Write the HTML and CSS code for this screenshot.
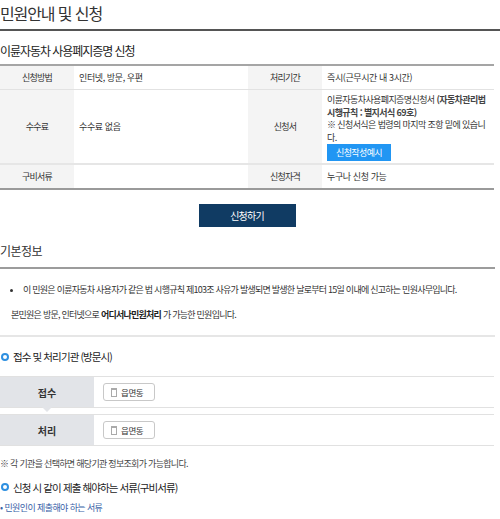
FILE: index.html
```html
<!DOCTYPE html>
<html lang="ko">
  <head>
    <meta charset="UTF-8" />
    <title>민원안내 및 신청</title>
    <link rel="stylesheet" href="styles.css">
  </head>
  <body>
    <div class="pagina">
      <h1 class="titulo">민원안내 및 신청</h1>

      <h2 class="subtitulo">이륜자동차 사용폐지증명 신청</h2>
      <table class="tabla">
        <tr>
          <th>신청방법</th>
          <td class="col1">인터넷, 방문, 우편</td>
          <th>처리기간</th>
          <td>즉시(근무시간 내 3시간)</td>
        </tr>
        <tr class="alta">
          <th>수수료</th>
          <td class="col1">수수료 없음</td>
          <th>신청서</th>
          <td class="formulario">
            이륜자동차사용폐지증명신청서 <b>(자동차관리법 시행규칙 : 별지서식 69호)</b><br />
            ※ 신청서식은 법령의 마지막 조항 밑에 있습니다.
            <span class="ejemplo">신청작성예시</span>
          </td>
        </tr>
        <tr class="ultima">
          <th>구비서류</th>
          <td class="col1"></td>
          <th>신청자격</th>
          <td>누구나 신청 가능</td>
        </tr>
      </table>

      <div class="centro">
        <span class="boton">신청하기</span>
      </div>

      <h2 class="seccion">기본정보</h2>
      <div class="info">
        <ul class="lista">
          <li>이 민원은 이륜자동차 사용자가 같은 법 시행규칙 제103조 사유가 발생되면 발생한 날로부터 15일 이내에 신고하는 민원사무입니다.</li>
        </ul>
        <p class="nota">본민원은 방문, 인터넷으로 <b>어디서나민원처리</b> 가 가능한 민원입니다.</p>
      </div>

      <h3 class="circulo">접수 및 처리기관 (방문시)</h3>
      <div class="organo primero">
        <div class="etiqueta">접수</div>
        <div class="valor"><span class="chip"><i class="doc"></i>읍면동</span></div>
      </div>
      <div class="organo">
        <div class="etiqueta">처리</div>
        <div class="valor"><span class="chip"><i class="doc"></i>읍면동</span></div>
      </div>
      <p class="aviso">※ 각 기관을 선택하면 해당기관 정보조회가 가능합니다.</p>

      <h3 class="circulo corto">신청 시 같이 제출 해야하는 서류(구비서류)</h3>
      <p class="enlace">• 민원인이 제출해야 하는 서류</p>
    </div>
  </body>
</html>
```

FILE: styles.css
```css
body {
  margin: 0;
  font-family: "Noto Sans CJK KR", "Noto Sans", sans-serif;
  color: #333;
}

.pagina {
  width: 500px;
}

.titulo {
  margin: 0;
  height: 29px;
  line-height: 26px;
  font-size: 16px;
  font-weight: normal;
  letter-spacing: -1.1px;
  color: #333;
  border-bottom: 2px solid #555;
}

.subtitulo {
  margin: 0;
  height: 33px;
  line-height: 39px;
  font-size: 12px;
  font-weight: normal;
  letter-spacing: -1.05px;
  color: #222;
}

.tabla {
  width: 494px;
  border-collapse: collapse;
  border-top: 2px solid #a5a5a5;
  border-bottom: 2px solid #9a9a9a;
  font-size: 9px;
  letter-spacing: -0.4px;
}

.tabla th {
  width: 74px;
  background: #f4f4f4;
  font-weight: normal;
  color: #333;
  padding: 0;
  letter-spacing: -0.8px;
}

.tabla td {
  padding: 0 5px;
  color: #333;
  height: 23px;
}

.tabla .col1 {
  width: 164px;
}

.tabla tr {
  border-bottom: 1px solid #e2e2e2;
}

.tabla .alta {
  border-bottom: 2px solid #e6e6e6;
}

.tabla .ultima {
  border-bottom: none;
}

.tabla .formulario {
  line-height: 12.5px;
  letter-spacing: -0.6px;
  padding-top: 4px;
  padding-bottom: 2px;
}

.formulario b {
  font-weight: bold;
  color: #444;
  word-break: keep-all;
}

.ejemplo {
  display: block;
  width: 64px;
  height: 17px;
  line-height: 17px;
  text-align: center;
  background: #2196f3;
  color: white;
  letter-spacing: -0.6px;
}

.centro {
  width: 494px;
  text-align: center;
  padding-top: 11px;
  height: 36px;
}

.boton {
  display: inline-block;
  width: 97px;
  height: 23px;
  line-height: 23px;
  background: #103b63;
  color: white;
  font-size: 10px;
  letter-spacing: -0.8px;
}

.seccion {
  margin: 0;
  height: 30px;
  line-height: 28px;
  font-size: 12px;
  font-weight: normal;
  letter-spacing: -0.5px;
  color: #333;
  width: 495px;
  border-bottom: 2px solid #9c9c9c;
}

.info {
  width: 495px;
  height: 66px;
  border-bottom: 2px solid #e6e6e6;
  font-size: 9px;
  letter-spacing: -0.75px;
  color: #333;
}

.lista {
  margin: 0;
  padding: 15px 0 0 23px;
  line-height: 12px;
}

.lista li {
  list-style: disc;
}

.nota {
  margin: 13px 0 0 11px;
  line-height: 12px;
}

.nota b {
  font-weight: bold;
  color: #222;
}

.circulo {
  margin: 0;
  height: 39px;
  font-size: 10.5px;
  font-weight: normal;
  letter-spacing: -0.9px;
  color: #222;
  display: flex;
  align-items: center;
  gap: 4px;
}

.circulo::before {
  content: "";
  width: 4px;
  height: 4px;
  margin-left: 1px;
  border: 2px solid #2e8fe0;
  border-radius: 50%;
}

.corto {
  height: 30px;
}

.organo {
  display: flex;
  width: 494px;
  height: 30px;
  border-top: 1px solid #e1e1e1;
  border-bottom: 1px solid #e1e1e1;
  margin-bottom: 6px;
}

.etiqueta {
  position: relative;
  width: 94px;
  background: #e2e4e8;
  display: flex;
  align-items: center;
  justify-content: center;
  font-size: 10px;
  font-weight: bold;
  color: #333;
}

.primero .etiqueta::after {
  content: "";
  position: absolute;
  left: 42px;
  bottom: -5px;
  border-left: 5px solid transparent;
  border-right: 5px solid transparent;
  border-top: 5px solid #e2e4e8;
}

.valor {
  display: flex;
  align-items: center;
  padding-left: 9px;
}

.chip {
  display: flex;
  align-items: center;
  gap: 4px;
  width: 43px;
  height: 16px;
  padding-left: 7px;
  border: 1px solid #c8c8c8;
  border-radius: 3px;
  font-size: 8.5px;
  letter-spacing: -0.4px;
  color: #333;
}

.doc {
  width: 4px;
  height: 6px;
  border: 1px solid #aaa;
  border-top-width: 2px;
}

.aviso {
  margin: -6px 0 0;
  padding-top: 12px;
  height: 14px;
  line-height: 12px;
  font-size: 9px;
  letter-spacing: -0.7px;
  color: #444;
}

.enlace {
  margin: 0;
  line-height: 12px;
  font-size: 9px;
  letter-spacing: -0.6px;
  color: #3a63a8;
}
```
